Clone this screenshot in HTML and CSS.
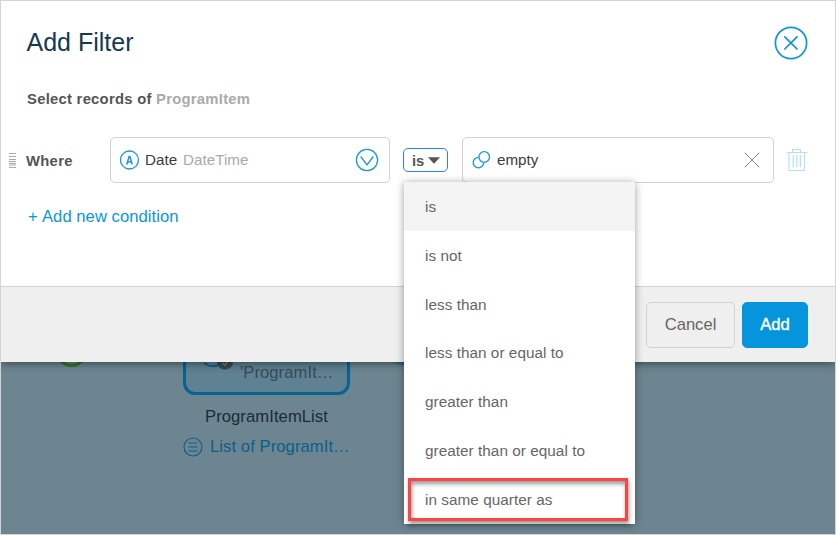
FILE: index.html
```html
<!DOCTYPE html>
<html lang="en">
<head>
<meta charset="utf-8">
<title>Add Filter</title>
<link rel="stylesheet" href="styles.css">
</head>
<body>
<div class="frame">
  <section class="dialog">
    <header class="dialog-header">
      <h1 class="title">Add Filter</h1>
      <svg class="close" width="34" height="34" viewBox="0 0 34 34"><circle cx="17" cy="17" r="15.6"/><path d="M10.3 10.3 23.5 23.5M23.5 10.3 10.3 23.5"/></svg>
    </header>
    <p class="subject">Select records of <span class="entity">ProgramItem</span></p>
    <div class="condition">
      <svg class="grip" width="7" height="15" viewBox="0 0 7 15"><path d="M0 .5h7M0 3.5h7M0 6.5h7M0 8.5h7M0 10.5h7M0 12h7M0 14.5h7"/></svg>
      <span class="where">Where</span>
      <div class="field attribute">
        <svg class="line-icon" width="20" height="20" viewBox="0 0 20 20"><circle cx="9.5" cy="10" r="9"/><path class="letter" d="M6.8 14.5 9.1 6.5h.8L12.2 14.5M7.7 12h3.6"/></svg>
        <span class="name">Date</span><span class="type">DateTime</span>
        <svg class="line-icon chevron" width="24" height="24" viewBox="0 0 24 24"><circle cx="12" cy="12" r="10.6"/><path d="m5.7 8.5 6.3 8.3 6.3-8.3"/></svg>
      </div>
      <div class="operator">is<svg width="12" height="7" viewBox="0 0 12 7"><path d="M0 .3h12L6 6.7z"/></svg></div>
      <div class="field value">
        <svg class="line-icon" width="20" height="20" viewBox="0 0 20 20"><circle cx="12.2" cy="7" r="5.3"/><path d="M6.6 7.4A5.2 5.2 0 1 0 11.6 12.5"/></svg>
        <span class="name">empty</span>
        <svg class="clear" width="16" height="16" viewBox="0 0 16 16"><path d="M1 1 15 15M15 1 1 15"/></svg>
      </div>
      <svg class="trash" width="22" height="24" viewBox="0 0 22 24"><path d="M.5 4.5h21M6.5 4V1.5h8V4M3 4.5v18h15.5v-18M7.2 7v12M10.8 7v12M14.4 7v12"/></svg>
    </div>
    <a class="add-condition"><span class="plus">+</span>Add new condition</a>
    <footer class="dialog-footer">
      <button class="button">Cancel</button>
      <button class="button primary">Add</button>
    </footer>
  </section>

  <section class="canvas">
    <div class="start-event"></div>
    <div class="activity">
      <span class="activity-text">'ProgramIt…</span>
      <svg class="activity-icon" width="36" height="12" viewBox="0 0 36 12"><path class="ring" d="M1 0q8 6 17 1"/><circle class="badge" cx="22" cy="-1.5" r="8.2"/><path class="tick" d="m19 0 3 2 3-4"/></svg>
    </div>
    <div class="next-event"></div>
    <div class="output-name">ProgramItemList</div>
    <div class="output-type">
      <svg width="20" height="20" viewBox="0 0 20 20"><circle cx="10" cy="10" r="9"/><path d="M5.5 6h9M5.5 10h9M5.5 14h9"/></svg>
      <span>List of ProgramIt…</span>
    </div>
  </section>

  <ul class="menu">
    <li class="active">is</li>
    <li>is not</li>
    <li>less than</li>
    <li>less than or equal to</li>
    <li>greater than</li>
    <li>greater than or equal to</li>
    <li class="marked">in same quarter as</li>
  </ul>
</div>
</body>
</html>
```
FILE: styles.css
```css
*, *::after { box-sizing: border-box; }
body { margin: 0; font-family: "Liberation Sans", Arial, sans-serif; }
svg { display: block; flex: none; fill: none; }

.frame {
  position: relative;
  display: flex;
  flex-direction: column;
  width: 836px;
  height: 535px;
  border: 1px solid #d4d4d4;
  overflow: hidden;
}

.dialog {
  position: relative;
  z-index: 1;
  flex: none;
  display: flex;
  flex-direction: column;
  height: 361px;
  background: #fff;
  box-shadow: 0 2px 8px rgba(0, 0, 0, .45);
}
.dialog-header {
  display: flex;
  justify-content: space-between;
  height: 60px;
  margin: 25px 27px 0 25.5px;
}
.title {
  margin: 2px 0 0;
  font-size: 25px;
  line-height: 28px;
  font-weight: 400;
  color: #143a50;
}
.close { stroke: #0a96dd; stroke-width: 1.7; }
.subject {
  margin: 4px 0 0 26px;
  font-size: 14.8px;
  line-height: 18px;
  font-weight: 700;
  letter-spacing: .27px;
  color: #555;
}
.entity { color: #aaa; }

.condition {
  display: flex;
  align-items: center;
  height: 46px;
  margin: 29px 0 0 8px;
}
.grip { stroke: #aaa; }
.where {
  width: 84px;
  margin: 1px 0 0 10px;
  font-size: 14.8px;
  font-weight: 700;
  letter-spacing: .3px;
  color: #555;
}
.field {
  display: flex;
  align-items: center;
  height: 46px;
  padding-left: 9px;
  border: 1px solid #d2d2d2;
  border-radius: 5px;
  font-size: 15.2px;
  color: #3c3c3c;
}
.attribute { width: 280px; }
.value { width: 312px; margin-left: 14px; }
.name, .type { padding-bottom: 1px; }
.name { margin-left: 5px; }
.type { margin-left: 6px; color: #aaa; }
.line-icon { stroke: #1797dc; stroke-width: 1.3; }
.letter { stroke-width: 1.5; }
.chevron { margin: 0 10px 0 auto; }
.operator {
  display: flex;
  align-items: center;
  gap: 4px;
  width: 45px;
  height: 24px;
  margin-left: 13px;
  padding: 1px 0 0 8px;
  border: 1px solid #2a80f5;
  border-radius: 5px;
  font-size: 14.8px;
  font-weight: 700;
  color: #555;
}
.operator svg { margin-bottom: 1px; }
.operator path { fill: #555; }
.clear { margin: 0 13px 0 auto; stroke: #888; }
.trash { margin-left: 12px; stroke: #b4dff7; stroke-width: 1.2; }

.add-condition {
  display: flex;
  margin: 24px 0 0 27px;
  font-size: 16.6px;
  line-height: 20px;
  letter-spacing: .05px;
  color: #0a96dd;
}
.plus { width: 14px; }

.dialog-footer {
  display: flex;
  justify-content: flex-end;
  gap: 7px;
  height: 76px;
  margin-top: auto;
  padding: 15px 27px 0 0;
  background: #efefef;
  border-top: 1px solid #d2d2d2;
}
.button {
  width: 89px;
  height: 46px;
  padding: 0;
  border: 1px solid #d2d2d2;
  border-radius: 5px;
  background: transparent;
  font: 16.6px "Liberation Sans", Arial, sans-serif;
  color: #666;
}
.primary {
  width: 66px;
  border-color: #0595dc;
  background: #0595dc;
  color: #fff;
  -webkit-text-stroke: .4px #fff;
}

.canvas {
  position: relative;
  flex: 1;
  background: #6d8590;
  font-size: 16.6px;
  letter-spacing: .08px;
}
.start-event {
  position: absolute;
  left: 55px;
  top: -26px;
  width: 31px;
  height: 31px;
  border: 3px solid #387627;
  border-radius: 50%;
}
.activity {
  position: absolute;
  left: 182px;
  top: -30px;
  width: 167px;
  height: 63px;
  border: 3px solid #07638f;
  border-radius: 12px;
  background: #5f8191;
}
.activity-text {
  position: absolute;
  left: 54px;
  top: 28px;
  line-height: 20px;
  white-space: nowrap;
  color: #374c57;
}
.activity-icon { position: absolute; left: 17px; top: 28px; overflow: visible; }
.ring { stroke: #07638f; stroke-width: 1.8; }
.badge { fill: #3b4a52; }
.tick { stroke: #6d8590; stroke-width: 1.5; }
.next-event {
  position: absolute;
  left: 382px;
  top: -37px;
  width: 40px;
  height: 40px;
  border-radius: 50%;
  background: #337897;
}
.output-name {
  position: absolute;
  left: 204px;
  top: 45px;
  line-height: 20px;
  color: #182c38;
}
.output-type {
  position: absolute;
  left: 182px;
  top: 75px;
  display: flex;
  align-items: center;
  gap: 7px;
  line-height: 20px;
  white-space: nowrap;
  color: #0b608b;
}
.output-type svg { margin-top: -1px; stroke: #0b608b; stroke-width: 1.2; }

.menu {
  position: absolute;
  z-index: 2;
  left: 403px;
  top: 181px;
  display: grid;
  grid-template-rows: repeat(7, 48.8px);
  width: 231px;
  height: 342px;
  margin: 0;
  padding: 0;
  list-style: none;
  background: #fff;
  box-shadow: 0 1px 8px rgba(0, 0, 0, .38);
  font-size: 15.3px;
  letter-spacing: .04px;
  color: #666;
}
.menu li { position: relative; display: flex; align-items: center; padding: 1.2px 0 0 21px; }
.menu .active { background: #f4f4f4; }
.marked::after {
  content: "";
  position: absolute;
  left: 4px;
  top: 3px;
  width: 220px;
  height: 43px;
  border: 3px solid #fe4344;
  box-shadow: 1px 3px 4px rgba(0, 0, 0, .4), inset 1px 3px 4px rgba(0, 0, 0, .4);
}
```
